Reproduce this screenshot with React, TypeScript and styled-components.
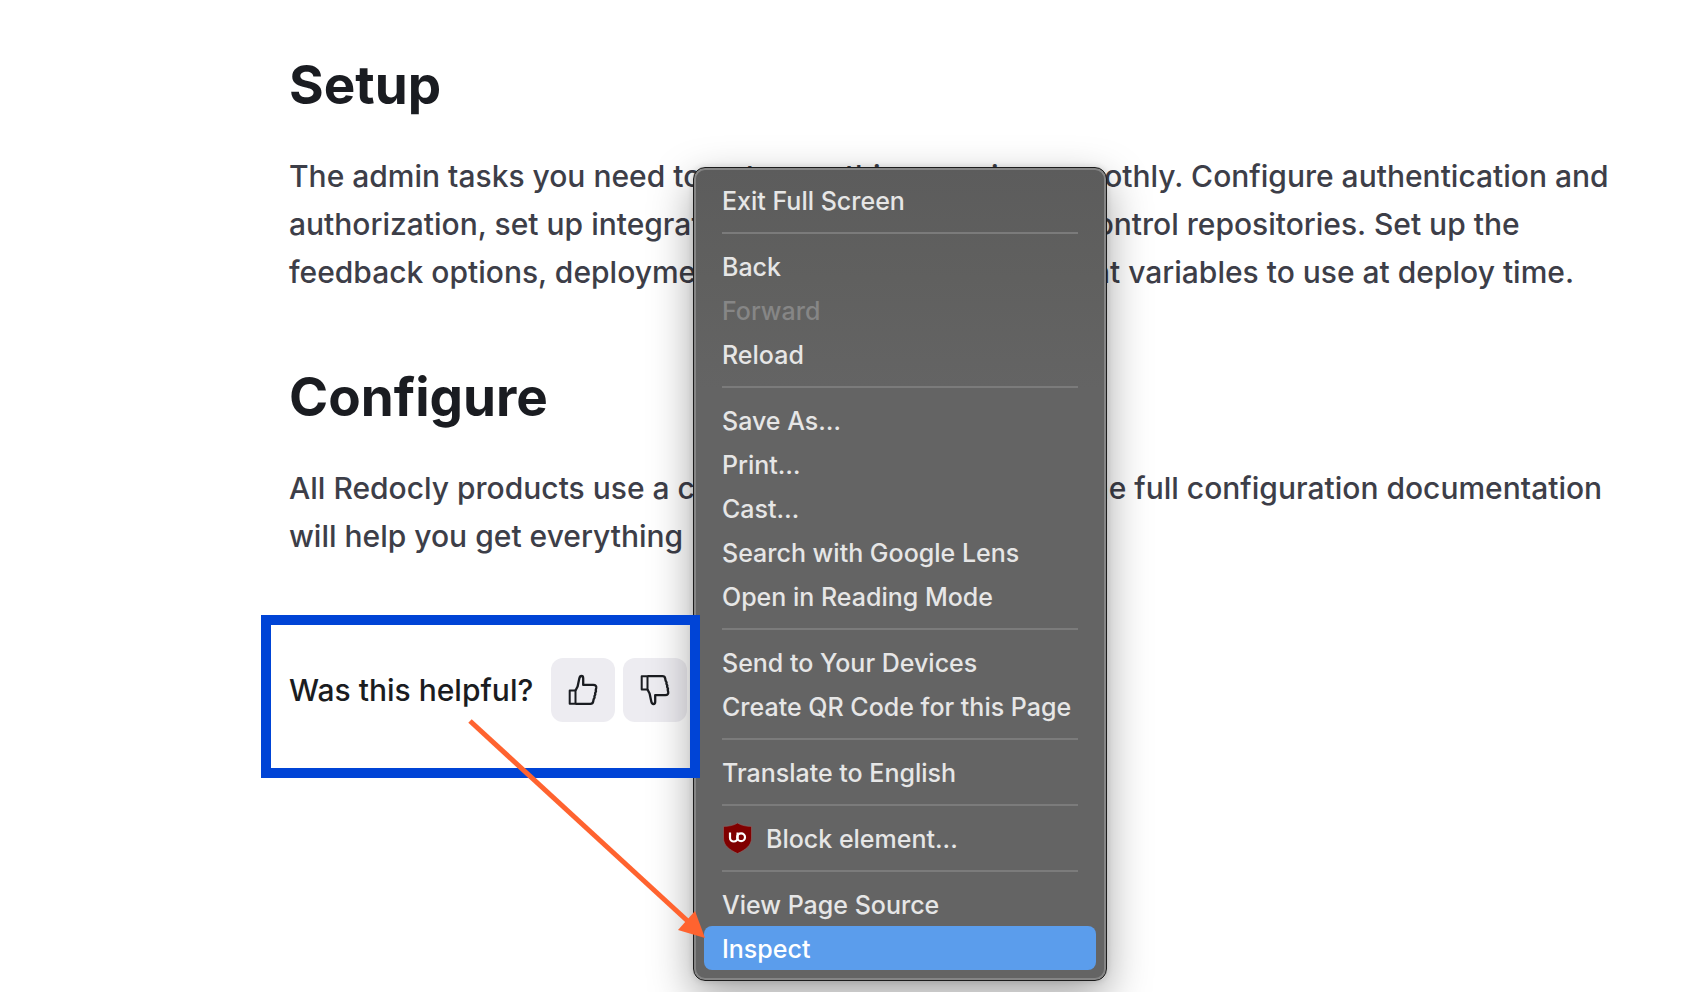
import React from "react";
import styled, { createGlobalStyle } from "styled-components";

const GlobalStyle = createGlobalStyle`
  *, *::before, *::after { box-sizing: border-box; }
  body {
    margin: 0;
    background: #ffffff;
    color: #1a1c21;
    font-family: Inter, "Liberation Sans", sans-serif;
    overflow: hidden;
  }
  button { font: inherit; color: inherit; border: 0; cursor: pointer; }
`;

const Page = styled.div`
  position: relative;
  min-height: 100vh;
`;

const Article = styled.main`
  display: flex;
  flex-direction: column;
  gap: 64px;
  padding: 50px 48px 0 289px;
`;

const Section = styled.section`
  display: flex;
  flex-direction: column;
  gap: 32px;
`;

const Heading = styled.h2`
  margin: 0;
  font-size: 53px;
  line-height: 70px;
  font-weight: 700;
  color: #1a1c21;
`;

const Paragraph = styled.p`
  margin: 0;
  padding-bottom: 2px;
  font-size: 30px;
  line-height: 48px;
  font-weight: 500;
  color: #3d3e48;
  white-space: nowrap;
`;

const Feedback = styled.div`
  display: flex;
  align-items: center;
  gap: 18px;
  margin-top: 32px;
  font-size: 30px;
  line-height: 48px;
  font-weight: 500;
`;

const Votes = styled.div`
  display: flex;
  gap: 8px;
`;

const VoteButton = styled.button`
  display: grid;
  place-items: center;
  width: 64px;
  height: 64px;
  padding: 0;
  border-radius: 12px;
  background: #edecf1;
`;

const Menu = styled.div`
  position: absolute;
  top: 167px;
  left: 693px;
  width: 414px;
  padding: 10px;
  border: 1px solid #1c1c1c;
  border-radius: 12px;
  background: linear-gradient(#5c5c5c, #60605f 110px, #646464 220px, #646464);
  box-shadow: inset 0 0 0 2px #858585, 0 16px 44px rgba(0, 0, 0, 0.36), 0 0 6px rgba(0, 0, 0, 0.14);
`;

const MenuItem = styled.button<{ $active?: boolean }>`
  display: flex;
  align-items: center;
  gap: 14px;
  width: 100%;
  height: 44px;
  padding: 2px 18px 0;
  border-radius: 8px;
  background: ${(p) => (p.$active ? "#5b9dec" : "transparent")};
  color: ${(p) => (p.$active ? "#ffffff" : "#e6e6e6")};
  font-size: 25px;
  line-height: 32px;
  font-weight: 500;
  text-align: left;
  white-space: nowrap;

  &:disabled { color: #868686; }
`;

const Separator = styled.hr`
  height: 2px;
  margin: 10px 18px;
  border: 0;
  background: #7b7b7b;
`;

const Highlight = styled.div`
  position: absolute;
  top: 615px;
  left: 261px;
  width: 439px;
  height: 163px;
  border: 10px solid #0044d6;
  pointer-events: none;
`;

const Pointer = styled.svg`
  position: absolute;
  top: 710px;
  left: 460px;
  pointer-events: none;
`;

const Thumb = ({ down }: { down?: boolean }) => (
  <svg width="32" height="32" viewBox="0 0 32 32" fill="none" stroke="#1a1c21" strokeWidth="2" strokeLinejoin="round" aria-hidden="true">
    <g transform={down ? "matrix(1 0 0 -1 0 32)" : undefined}>
      <path d="M2.700 16.500H8.500V29.800H2.700z" />
      <path d="M8.500 16.500L10.600 12.500 12.300 4.500C12.700 2.600 13.500 2 14.500 2 15.700 2 16.200 3 16.200 4.200V10.900H26.300C28.600 10.900 29.600 12 29.200 14L28.700 16.200 29 17.200 28.100 19.200 28.300 20.400 27.400 22.300 27.600 23.500 26.600 25.400 26.200 27.500C25.900 29 25 29.800 23.500 29.800H8.500" strokeWidth="2.300" />
    </g>
  </svg>
);

const Shield = () => (
  <svg width="30" height="32" viewBox="0 0 30 32" aria-hidden="true">
    <path d="M15.500 0C12 2.400 6.500 3.400 1.500 3.400V15c0 7.500 5.500 11.500 14 15.500 8.500-4 14-8 14-15.500V3.400c-5 0-10.500-1-14-3.400z" fill="#800000" stroke="#8b6a6a" strokeWidth=".6" />
    <path d="M8 9.500v5.200a3.800 3.800 0 0 0 7.600 0V9.500" fill="none" stroke="#fff" strokeWidth="2.200" />
    <circle cx="19.100" cy="14.200" r="3.900" fill="none" stroke="#fff" strokeWidth="2.200" />
  </svg>
);

type Entry = { label: string; disabled?: boolean; active?: boolean; icon?: React.ReactNode };

const groups: Entry[][] = [
  [{ label: "Exit Full Screen" }],
  [{ label: "Back" }, { label: "Forward", disabled: true }, { label: "Reload" }],
  [
    { label: "Save As…" },
    { label: "Print…" },
    { label: "Cast…" },
    { label: "Search with Google Lens" },
    { label: "Open in Reading Mode" },
  ],
  [{ label: "Send to Your Devices" }, { label: "Create QR Code for this Page" }],
  [{ label: "Translate to English" }],
  [{ label: "Block element...", icon: <Shield /> }],
  [{ label: "View Page Source" }, { label: "Inspect", active: true }],
];

export default function App() {
  return (
    <Page>
      <GlobalStyle />
      <Article>
        <Section>
          <Heading>Setup</Heading>
          <Paragraph>
            The admin tasks you need to get everything running smoothly. Configure authentication and
            <br />
            authorization, set up integrations, and connect version control repositories. Set up the
            <br />
            feedback options, deployment previews, and environment variables to use at deploy time.
          </Paragraph>
        </Section>
        <Section>
          <Heading>Configure</Heading>
          <Paragraph>
            All Redocly products use a common configuration file. The full configuration documentation
            <br />
            will help you get everything
          </Paragraph>
        </Section>
        <Feedback>
          <span>Was this helpful?</span>
          <Votes>
            <VoteButton aria-label="Yes"><Thumb /></VoteButton>
            <VoteButton aria-label="No"><Thumb down /></VoteButton>
          </Votes>
        </Feedback>
      </Article>
      <Menu role="menu">
        {groups.map((group, i) => (
          <React.Fragment key={group[0].label}>
            {i > 0 && <Separator />}
            {group.map((item) => (
              <MenuItem key={item.label} role="menuitem" disabled={item.disabled} $active={item.active}>
                {item.icon}
                {item.label}
              </MenuItem>
            ))}
          </React.Fragment>
        ))}
      </Menu>
      <Highlight />
      <Pointer width="250" height="232" viewBox="0 0 250 232" aria-hidden="true">
        <path d="M10 11L232 215" stroke="#ff632f" strokeWidth="5" />
        <path d="M245 228L235 201L218 220z" fill="#ff632f" />
      </Pointer>
    </Page>
  );
}
